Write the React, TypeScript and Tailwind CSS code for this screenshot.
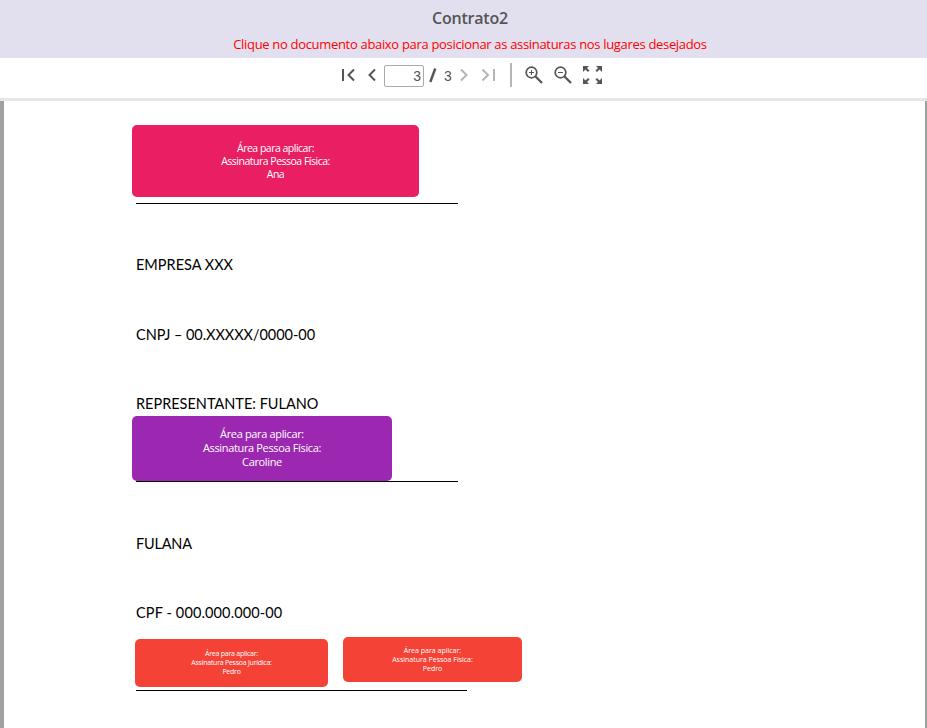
import React from 'react';

const ui = "font-['Open_Sans',sans-serif]";

function Line({ text, className }: { text: string; className: string }) {
  return (
    <p className="flex h-6 items-center">
      <span className={`whitespace-nowrap ${className}`}>{text}</span>
    </p>
  );
}

function Signature({ kind, name, className }: { kind: string; name: string; className: string }) {
  return (
    <div className={`absolute flex flex-col items-center justify-center rounded-[5px] font-medium whitespace-nowrap text-white ${ui} ${className}`}>
      <span>Área para aplicar:</span>
      <span>Assinatura Pessoa {kind}:</span>
      <span>{name}</span>
    </div>
  );
}

function Toolbar() {
  return (
    <div className="flex h-[43px] shrink-0 border-b-[3px] border-[#e6e6e6] bg-white pl-[340px] text-[#555]">
      <svg width="40" height="34" viewBox="0 0 40 34" fill="none" stroke="currentColor" strokeWidth="2">
        <path d="M3 11v12M14 11.5 8.5 17l5.500 5.500M35 11.500 29.500 17l5.500 5.500" />
      </svg>
      <div className="mt-[7px] ml-[4px] flex h-[22px] w-[40px] items-center justify-end rounded-[2px] border border-[#aaa] pr-[2px] font-['Liberation_Sans',sans-serif] text-[14px]">3</div>
      <svg width="10" height="34" viewBox="0 0 10 34" className="ml-[4px]" stroke="currentColor" strokeWidth="2.400">
        <path d="M2.300 24 7.300 10.500" />
      </svg>
      <span className="mt-[7px] ml-[6px] w-[10px] font-['Liberation_Sans',sans-serif] text-[14px] leading-[22px]">3</span>
      <svg width="150" height="40" viewBox="0 0 150 40" fill="none" stroke="currentColor" strokeWidth="2" className="ml-[2px]">
        <g stroke="#b5b5b5">
          <path d="m5 11.500 5.500 5.500L5 22.500M26.500 11.500 32 17l-5.500 5.500M38 11v12" />
          <path d="M55 5v24" />
        </g>
        <circle cx="75.500" cy="14.500" r="5.300" strokeWidth="1.700" />
        <path d="m79.500 18.500 6.500 6.500" strokeWidth="2.300" />
        <path d="M73 14.500h5M75.500 12v5" strokeWidth="1" />
        <circle cx="104.500" cy="14.500" r="5.300" strokeWidth="1.700" />
        <path d="m108.500 18.500 6.500 6.500" strokeWidth="2.300" />
        <path d="M102 14.500h5" strokeWidth="1" />
        <g fill="currentColor" stroke="none">
          <path d="M127 8h6l-2 2 2.500 2.500-1.500 1.500-2.500-2.500-2.500 2.500z" />
          <path d="M146 8h-6l2 2-2.500 2.500 1.500 1.500 2.500-2.500 2.500 2.500z" />
          <path d="M127 26h6l-2-2 2.500-2.500-1.500-1.500-2.500 2.500-2.500-2.500z" />
          <path d="M146 26h-6l2-2-2.500-2.500 1.500-1.500 2.500 2.500 2.500-2.500z" />
        </g>
      </svg>
    </div>
  );
}

export default function App() {
  return (
    <div className="flex h-[728px] w-[927px] flex-col overflow-hidden bg-white">
      <header className={`flex h-[58px] shrink-0 flex-col items-center bg-[#e2e0ef] pl-[13px] whitespace-nowrap ${ui}`}>
        <h1 className="mt-[6px] text-[16px] leading-6 font-semibold tracking-[-0.2px] text-[#555]">Contrato2</h1>
        <p className="mt-[4px] text-[13px] leading-5 tracking-[-0.320px] text-[#f00]">Clique no documento abaixo para posicionar as assinaturas nos lugares desejados</p>
      </header>
      <Toolbar />
      <main className="relative flex-1 border-r-2 border-l-4 border-[#a0a0a0] bg-white pt-[102px] pl-[132px] font-['Lato',sans-serif] text-[14.500px] leading-6 text-black">
        <div className="h-[1px] w-[322px] bg-black" />
        <div className="mt-[49px] flex flex-col gap-[45.500px]">
          <Line text="EMPRESA XXX" className="" />
          <Line text="CNPJ – 00.XXXXX/0000-00" className="tracking-[-0.040px]" />
          <Line text="REPRESENTANTE: FULANO" className="" />
        </div>
        <div className="mt-[65px] h-[1px] w-[322px] bg-black" />
        <div className="mt-[50px] flex flex-col gap-[45px]">
          <Line text="FULANA" className="tracking-[-0.2px]" />
          <Line text="CPF - 000.000.000-00" className="tracking-[0.130px]" />
        </div>
        <div className="mt-[65px] h-[1px] w-[331px] bg-black" />
        <Signature kind="Física" name="Ana" className="top-[24px] left-[128px] h-[72px] w-[287px] bg-[#e91e63] text-[10.500px] leading-[13px] tracking-[-0.5px]" />
        <Signature kind="Física" name="Caroline" className="top-[315px] left-[128px] h-[65px] w-[260px] bg-[#9c27b0] pb-[2px] text-[11px] leading-[14px] tracking-[-0.350px]" />
        <Signature kind="Jurídica" name="Pedro" className="top-[538px] left-[131px] h-[48px] w-[193px] bg-[#f44336] pb-[2px] text-[7px] leading-[9px] tracking-[-0.250px]" />
        <Signature kind="Física" name="Pedro" className="top-[536px] left-[339px] h-[45px] w-[179px] bg-[#f44336] text-[7px] leading-[9px]" />
      </main>
    </div>
  );
}
